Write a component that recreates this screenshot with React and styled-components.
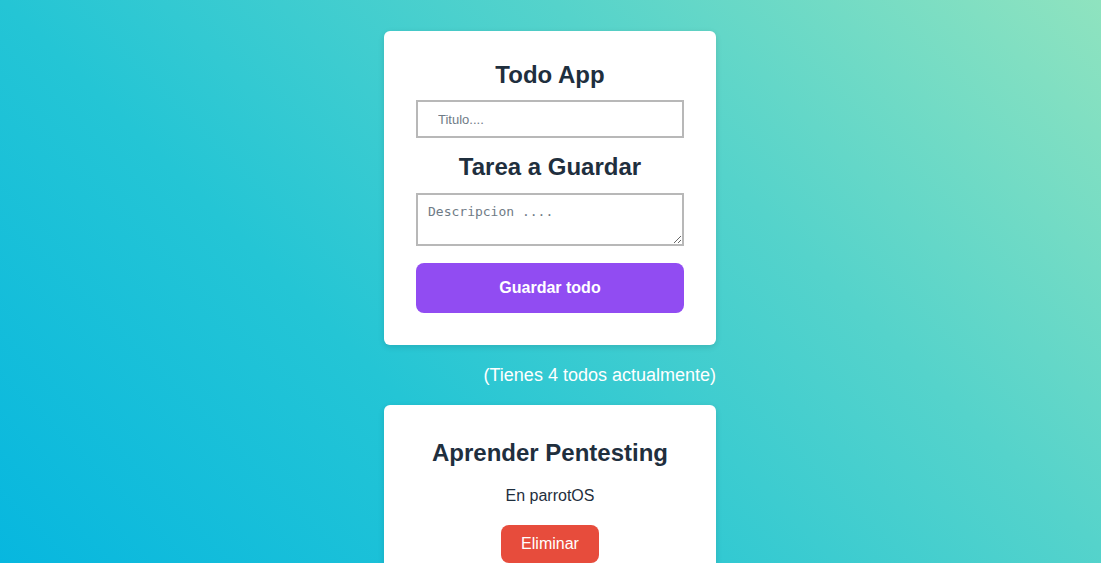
import React, { useState } from "react";
import styled, { createGlobalStyle } from "styled-components";

const GlobalStyle = createGlobalStyle`
  html, body {
    margin: 0;
    padding: 0;
  }
  body {
    font-family: "Liberation Sans", Arial, sans-serif;
    min-height: 100vh;
    background: linear-gradient(45deg, #07b7df 0%, #24c5d5 34%, #55d3cb 67%, #8fe3bf 100%);
    background-attachment: fixed;
  }
`;

const Page = styled.div`
  display: flex;
  flex-direction: column;
  align-items: center;
  padding: 31px 1px 0 0;
`;

const Column = styled.div`
  width: 332px;
  display: flex;
  flex-direction: column;
  gap: 19px;
`;

const Card = styled.div`
  background: #ffffff;
  border-radius: 6px;
  box-shadow: 0 2px 6px rgba(0, 0, 0, 0.12);
  padding: ${(p) => p.$top || 30}px 32px 32px;
  display: flex;
  flex-direction: column;
  align-items: ${(p) => (p.$center ? "center" : "stretch")};
`;

const Title = styled.h2`
  margin: ${(p) => p.$mt || 0}px 0 0;
  font-size: 24px;
  line-height: 28px;
  font-weight: 700;
  color: #1f2f3e;
  text-align: center;
`;

const TitleInput = styled.input`
  margin-top: 11px;
  height: 38px;
  box-sizing: border-box;
  border: 2px solid #b8b8b8;
  padding: 0 20px;
  font-family: "Liberation Sans", Arial, sans-serif;
  font-size: 13px;
  color: #333;
  outline: none;
  &::placeholder {
    color: #6f7b86;
  }
`;

const DescArea = styled.textarea`
  margin-top: 12px;
  height: 53px;
  box-sizing: border-box;
  border: 2px solid #b8b8b8;
  padding: 9px 10px;
  font-family: "DejaVu Sans Mono", monospace;
  font-size: 13px;
  outline: none;
  &::placeholder {
    color: #6f7b86;
  }
`;

const SaveButton = styled.button`
  margin-top: 17px;
  height: 50px;
  border: 0;
  border-radius: 8px;
  background: #914cf2;
  color: #ffffff;
  font-family: "Liberation Sans", Arial, sans-serif;
  font-size: 16px;
  font-weight: 700;
  cursor: pointer;
`;

const Count = styled.p`
  margin: 0;
  text-align: right;
  color: #ffffff;
  font-size: 18px;
  line-height: 22px;
`;

const Desc = styled.p`
  margin: 20px 0 0;
  font-size: 16px;
  line-height: 18px;
  color: #1f2f3e;
`;

const DeleteButton = styled.button`
  margin-top: 20px;
  padding: 10px 20px;
  border: 0;
  border-radius: 8px;
  background: #e74c3c;
  color: #ffffff;
  font-family: "Liberation Sans", Arial, sans-serif;
  font-size: 16px;
  line-height: 18px;
  cursor: pointer;
`;

const todos = [
  { title: "Aprender Pentesting", desc: "En parrotOS" },
  { title: "Aprender React", desc: "Con hooks" },
  { title: "Hacer ejercicio", desc: "Todos los dias" },
  { title: "Leer un libro", desc: "Antes de dormir" },
];

export default function App() {
  const [list, setList] = useState(todos);

  return (
    <>
      <GlobalStyle />
      <Page>
        <Column>
          <Card>
            <Title>Todo App</Title>
            <TitleInput type="text" placeholder="Titulo...." />
            <Title $mt={15}>Tarea a Guardar</Title>
            <DescArea placeholder="Descripcion ...." />
            <SaveButton>Guardar todo</SaveButton>
          </Card>
          <Count>(Tienes {list.length} todos actualmente)</Count>
          {list.map((t, i) => (
            <Card key={i} $center $top={34}>
              <Title>{t.title}</Title>
              <Desc>{t.desc}</Desc>
              <DeleteButton onClick={() => setList(list.filter((_, j) => j !== i))}>
                Eliminar
              </DeleteButton>
            </Card>
          ))}
        </Column>
      </Page>
    </>
  );
}
